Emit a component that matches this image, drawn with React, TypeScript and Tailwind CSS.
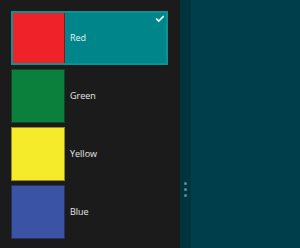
import { Check } from 'lucide-react';

const colors = [
  { name: 'Red', hex: '#ee2228' },
  { name: 'Green', hex: '#0b7f3c' },
  { name: 'Yellow', hex: '#f6eb2a' },
  { name: 'Blue', hex: '#3a53a4' },
];

const App = () => {
  const selected = 'Red';

  return (
    <div
      className="flex w-[300px] h-[248px] overflow-hidden bg-[#1b1b1b]"
      style={{ fontFamily: '"Segoe UI", "Open Sans", sans-serif' }}
    >
      <div className="w-[180px] flex flex-col gap-[4px] pt-[11px] pl-[11px]">
        {colors.map((c) => {
          const isSel = c.name === selected;
          return (
            <div
              key={c.name}
              className={`relative flex items-center h-[54px] w-[157px] ${isSel ? 'bg-[#00858a]' : ''}`}
            >
              <div
                className="w-[54px] h-[54px] border border-black/40 shrink-0"
                style={{ backgroundColor: c.hex }}
              />
              <span className="ml-[5px] text-[9px] text-white/90">{c.name}</span>
              {isSel && (
                <>
                  <div className="absolute inset-0 border-2 border-[#0a9295] pointer-events-none" />
                  <Check size={10} strokeWidth={4} className="absolute top-[3px] right-[3px] text-white" />
                </>
              )}
            </div>
          );
        })}
      </div>
      <div className="w-[11px] bg-[#003540] flex flex-col items-center gap-[3px] pt-[182px]">
        <div className="w-[3px] h-[3px] rounded-full bg-[#5f8c93]" />
        <div className="w-[3px] h-[3px] rounded-full bg-[#5f8c93]" />
        <div className="w-[3px] h-[3px] rounded-full bg-[#5f8c93]" />
      </div>
      <div className="flex-1 bg-[#003e4c]" />
    </div>
  );
};

export default App;
